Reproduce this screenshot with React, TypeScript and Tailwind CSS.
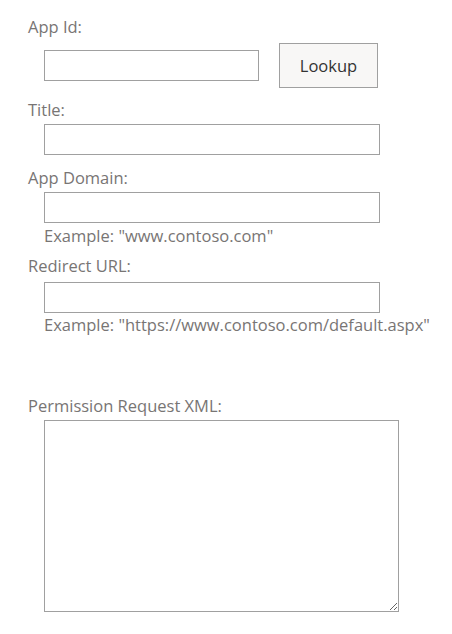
import React from "react";

export default function App() {
  const font = { fontFamily: '"Open Sans", "Noto Sans", sans-serif' };
  return (
    <div className="min-h-[634px] w-[452px] bg-white pl-[28px] pt-[17px] text-[16.5px] leading-[20px] text-[#787574]" style={font}>
      <div>App Id:</div>
      <div className="mt-[6px] flex h-[45px] items-center">
        <input className="ml-[16px] h-[31px] w-[215px] border border-[#a0a0a0] bg-white outline-none" />
        <button className="ml-[20px] h-[45px] w-[99px] border border-[#a0a0a0] bg-[#f8f7f6] text-[#333333]">Lookup</button>
      </div>
      <div className="mt-[12px]">Title:</div>
      <input className="ml-[16px] mt-[4px] block h-[31px] w-[336px] border border-[#a0a0a0] bg-white outline-none" />
      <div className="mt-[13px]">App Domain:</div>
      <input className="ml-[16px] mt-[4px] block h-[31px] w-[336px] border border-[#a0a0a0] bg-white outline-none" />
      <div className="ml-[16px] mt-[3px]">Example: "www.contoso.com"</div>
      <div className="mt-[10px]">Redirect URL:</div>
      <input className="ml-[16px] mt-[6px] block h-[31px] w-[336px] border border-[#a0a0a0] bg-white outline-none" />
      <div className="ml-[16px] mt-[2px]">Example: "https://www.contoso.com/default.aspx"</div>
      <div className="mt-[61px]">Permission Request XML:</div>
      <textarea className="ml-[16px] mt-[4px] block h-[192px] w-[355px] border border-[#a0a0a0] bg-white outline-none" />
    </div>
  );
}
